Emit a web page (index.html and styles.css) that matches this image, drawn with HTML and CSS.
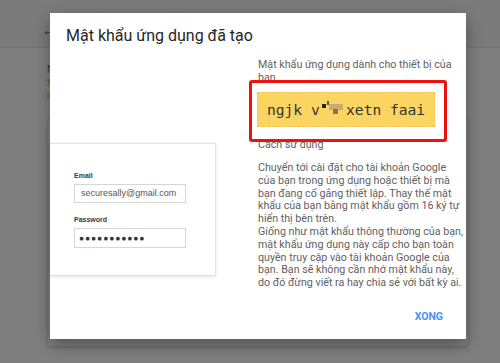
FILE: index.html
```html
<!DOCTYPE html>
<html lang="vi">
<head>
    <meta charset="UTF-8">
    <meta name="viewport" content="width=device-width, initial-scale=1.0">
    <title>Mật khẩu ứng dụng</title>
    <link rel="stylesheet" href="styles.css">
</head>
<body>

    <!-- Page behind the dim overlay -->
    <div class="topbar">
        <span class="back-arrow">&#8592;</span>
    </div>
    <div class="page-body">
        <p class="page-text">
            <span class="dark">Mật khẩu ứng dụng</span><br>
            <span class="warm">tạo mật khẩu</span><br>
            <span class="warm">nhập mật khẩu</span>
        </p>
        <div class="page-card"></div>
    </div>

    <!-- Dialog -->
    <div class="dialog">
        <h2 class="dialog-title">Mật khẩu ứng dụng đã tạo</h2>

        <div class="dialog-body">
            <!-- Sign-in illustration -->
            <div class="illustration">
                <div class="login-card">
                    <label class="field-label">Email</label>
                    <div class="field">securesally@gmail.com</div>
                    <label class="field-label">Password</label>
                    <div class="field dots">&#9679;&#9679;&#9679;&#9679;&#9679;&#9679;&#9679;&#9679;&#9679;&#9679;&#9679;</div>
                </div>
            </div>

            <div class="info">
                <p class="info-label">Mật khẩu ứng dụng dành cho thiết bị của<br>bạn</p>
                <div class="app-password">ngjk v<span class="redacted"><i class="px px-black"></i><i class="px px-tick"></i><i class="px px-tan"></i><i class="px px-brown"></i></span> xetn faai</div>
                <p class="info-heading">Cách sử dụng</p>
                <p class="info-text">
                    Chuyển tới cài đặt cho tài khoản Google<br>
                    của bạn trong ứng dụng hoặc thiết bị mà<br>
                    bạn đang cố gắng thiết lập. Thay thế mật<br>
                    khẩu của bạn bằng mật khẩu gồm 16 ký tự<br>
                    hiển thị bên trên.<br>
                    Giống như mật khẩu thông thường của bạn,<br>
                    mật khẩu ứng dụng này cấp cho bạn toàn<br>
                    quyền truy cập vào tài khoản Google của<br>
                    bạn. Bạn sẽ không cần nhớ mật khẩu này,<br>
                    do đó đừng viết ra hay chia sẻ với bất kỳ ai.
                </p>
            </div>
        </div>

        <div class="dialog-actions">
            <button class="done-btn">XONG</button>
        </div>

        <!-- Red annotation around the generated password -->
        <div class="highlight"></div>
    </div>

</body>
</html>
```

FILE: styles.css
```css
/* Dimmed page */
body {
    margin: 0;
    background-color: #7f7f7f;
    font-family: Roboto, "Noto Sans", Arial, sans-serif;
    width: 500px;
    height: 363px;
    overflow: hidden;
    position: relative;
}

.topbar {
    height: 48px;
    background-color: #7b7b7b;
    border-bottom: 1px solid #727272;
    box-sizing: border-box;
    padding-left: 42px;
    line-height: 60px;
}

.back-arrow {
    color: #2a2a2a;
    font-size: 14px;
}

.page-body {
    padding-left: 47px;
}

.page-text {
    margin: 15px 0 0;
    font-size: 11px;
    line-height: 13px;
}

.page-text .dark {
    color: #3e3e3e;
}

.page-text .warm {
    color: #7a5a30;
}

.page-card {
    margin-top: 16px;
    width: 422px;
    height: 229px;
    border: 1px solid #757575;
    border-radius: 4px;
    box-sizing: border-box;
    box-shadow: 0 1px 2px rgba(0, 0, 0, 0.15);
}

/* Dialog box */
.dialog {
    position: absolute;
    left: 50px;
    top: 13px;
    width: 416px;
    height: 326px;
    background-color: #fff;
    box-shadow: 0 6px 16px rgba(0, 0, 0, 0.35);
    display: flex;
    flex-direction: column;
}

.dialog-title {
    margin: 0;
    padding: 13px 16px 0;
    font-size: 16px;
    line-height: 20px;
    font-weight: 400;
    color: #262626;
}

.dialog-body {
    display: flex;
}

.illustration {
    width: 166px;
    flex-shrink: 0;
    padding-top: 97px;
}

.login-card {
    height: 133px;
    box-sizing: border-box;
    padding: 27px 0 0 24px;
    border: 1px solid #e3e3e3;
    border-left: none;
    box-shadow: 0 1px 3px rgba(0, 0, 0, 0.12);
    font-family: "Liberation Sans", Arial, sans-serif;
}

.field-label {
    display: block;
    font-size: 7px;
    font-weight: bold;
    color: #3a3a3a;
    line-height: 10px;
    margin-bottom: 3px;
}

.field {
    width: 112px;
    height: 19px;
    box-sizing: border-box;
    border: 1px solid #d6d6d6;
    padding-left: 6px;
    font-size: 9px;
    line-height: 17px;
    color: #555;
    margin-bottom: 12px;
}

.field.dots {
    height: 20px;
    padding-left: 4px;
    font-size: 8.5px;
    letter-spacing: 0.9px;
    line-height: 19px;
    color: #333;
}

/* Right column */
.info {
    margin-left: 42px;
    width: 200px;
    padding-top: 12px;
    color: #5f5f5f;
    font-size: 10.7px;
    white-space: nowrap;
}

.info-label {
    margin: 0;
    line-height: 13px;
}

.app-password {
    margin: 8px 0 0 -1px;
    width: 178px;
    height: 35px;
    box-sizing: border-box;
    background-color: #fcd462;
    border: 1px dashed #eec35a;
    padding-left: 9px;
    font-family: "DejaVu Sans Mono", "Liberation Mono", monospace;
    font-size: 14.6px;
    line-height: 33px;
    color: #333;
    white-space: pre;
}

/* Pixelated part of the password */
.redacted {
    display: inline-block;
    position: relative;
    width: 2ch;
    height: 14px;
    vertical-align: -3px;
}

.px {
    position: absolute;
    display: block;
}

.px-black {
    left: 2px;
    top: 0;
    width: 4px;
    height: 4px;
    background-color: #222;
}

.px-tick {
    left: 7px;
    top: -3px;
    width: 2px;
    height: 4px;
    background-color: #555;
}

.px-tan {
    left: 9px;
    top: 0;
    width: 14px;
    height: 6px;
    background-color: #c9ab6a;
}

.px-brown {
    left: 13px;
    top: 5px;
    width: 5px;
    height: 5px;
    background-color: #8a7445;
}

.info-heading {
    margin: 11px 0 0;
    line-height: 13px;
}

.info-text {
    margin: 11px 0 0;
    line-height: 12.8px;
}

.dialog-actions {
    margin-top: auto;
    padding: 0 23px 15px 0;
    text-align: right;
}

.done-btn {
    border: none;
    background: none;
    padding: 0;
    font-family: Roboto, Arial, sans-serif;
    font-size: 10.5px;
    font-weight: bold;
    line-height: 14px;
    color: #4d8ff5;
}

/* Red box drawn over the screenshot */
.highlight {
    position: absolute;
    left: 199px;
    top: 67px;
    width: 198px;
    height: 62px;
    box-sizing: border-box;
    border: 3px solid #ee1111;
    border-radius: 3px;
}
```
